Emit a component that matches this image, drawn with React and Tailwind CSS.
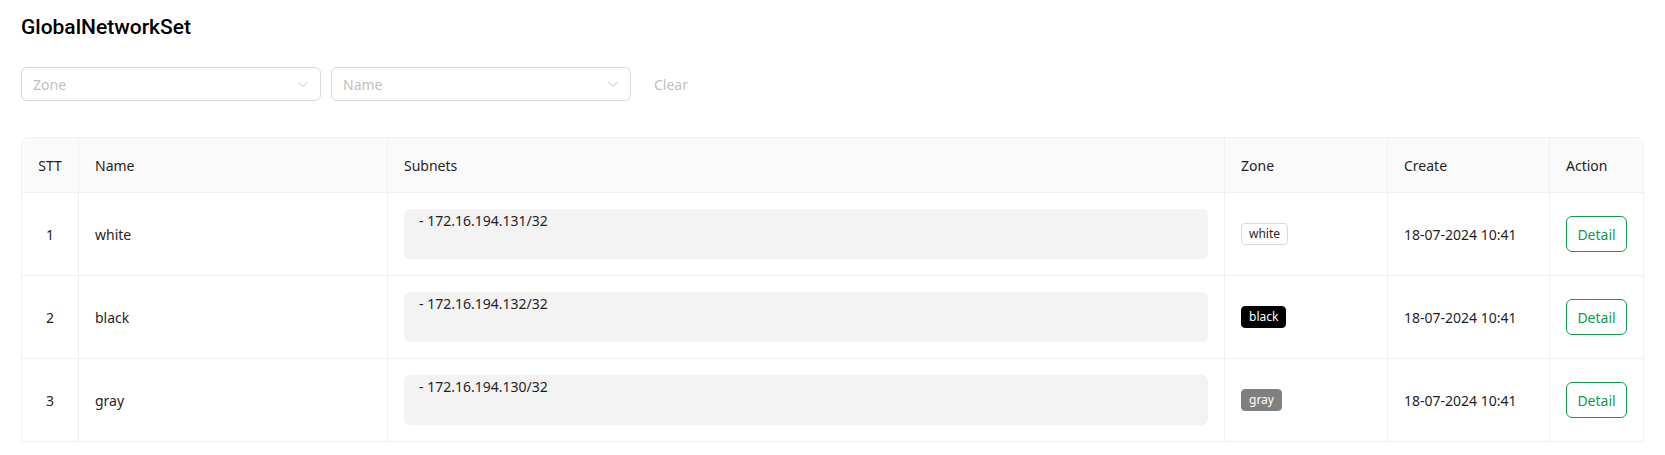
import React from "react";

const rows = [
  { id: 1, name: "white", subnet: "172.16.194.131/32", zone: "white", created: "18-07-2024 10:41" },
  { id: 2, name: "black", subnet: "172.16.194.132/32", zone: "black", created: "18-07-2024 10:41" },
  { id: 3, name: "gray", subnet: "172.16.194.130/32", zone: "gray", created: "18-07-2024 10:41" },
];

const tagClass = {
  white: "bg-white text-[#1f1f1f] border-[#d9d9d9]",
  black: "bg-black text-white border-black",
  gray: "bg-[#808080] text-white border-[#808080]",
};

const cols = "grid grid-cols-[57px_309px_837px_163px_162px_94px]";

function Chevron() {
  return (
    <svg width="12" height="12" viewBox="0 0 12 12" className="shrink-0">
      <polyline points="1.5,4 6,8.5 10.5,4" fill="none" stroke="#bfbfbf" strokeWidth="1" />
    </svg>
  );
}

function Select({ placeholder }) {
  return (
    <div className="w-[300px] h-[34px] border border-[#d9d9d9] rounded-md bg-white flex items-center justify-between pl-[11px] pr-[11px]">
      <span className="text-[14px] text-[#bfbfbf]">{placeholder}</span>
      <Chevron />
    </div>
  );
}

export default function App() {
  return (
    <div className="min-h-screen bg-white px-[21px] pt-[13px] text-[#1f1f1f]" style={{ fontFamily: '"Noto Sans", "Open Sans", sans-serif' }}>
      {/* Header */}
      <h1 className="text-[21px] leading-[28px] font-medium text-black" style={{ fontFamily: "Roboto, sans-serif" }}>
        GlobalNetworkSet
      </h1>

      {/* Filters */}
      <div className="mt-[26px] flex items-center gap-[10px]">
        <Select placeholder="Zone" />
        <Select placeholder="Name" />
        <button className="h-[34px] px-[13px] text-[14px] text-[#bfbfbf]">Clear</button>
      </div>

      {/* Table */}
      <div className="mt-[36px] border-l border-t border-[#f0f0f0] rounded-t-lg overflow-hidden text-[14px]">
        <div className={`${cols} bg-[#fafafa]`}>
          {["STT", "Name", "Subnets", "Zone", "Create", "Action"].map((h, i) => (
            <div
              key={h}
              className={`h-[55px] border-r border-b border-[#f0f0f0] flex items-center ${i === 0 ? "justify-center" : "px-4"}`}
            >
              {h}
            </div>
          ))}
        </div>
        {rows.map((r) => (
          <div key={r.id} className={cols}>
            <div className="h-[83px] border-r border-b border-[#f0f0f0] flex items-center justify-center">{r.id}</div>
            <div className="h-[83px] border-r border-b border-[#f0f0f0] flex items-center px-4">{r.name}</div>
            <div className="h-[83px] border-r border-b border-[#f0f0f0] flex items-center px-4">
              <pre className="w-full h-[50px] bg-[#f3f3f3] rounded-md pl-[15px] pt-[1px] leading-[22px] text-[14px] whitespace-pre" style={{ fontFamily: '"Noto Sans", sans-serif' }}>
                {"- " + r.subnet}
              </pre>
            </div>
            <div className="h-[83px] border-r border-b border-[#f0f0f0] flex items-center px-4">
              <span className={`h-[22px] px-[7px] border rounded text-[12px] leading-[20px] ${tagClass[r.zone]}`}>{r.zone}</span>
            </div>
            <div className="h-[83px] border-r border-b border-[#f0f0f0] flex items-center px-4">{r.created}</div>
            <div className="h-[83px] border-r border-b border-[#f0f0f0] flex items-center px-4">
              <button className="h-[36px] w-[61px] border border-[#12994e] text-[#12994e] rounded-md text-[14px]">Detail</button>
            </div>
          </div>
        ))}
      </div>
    </div>
  );
}
